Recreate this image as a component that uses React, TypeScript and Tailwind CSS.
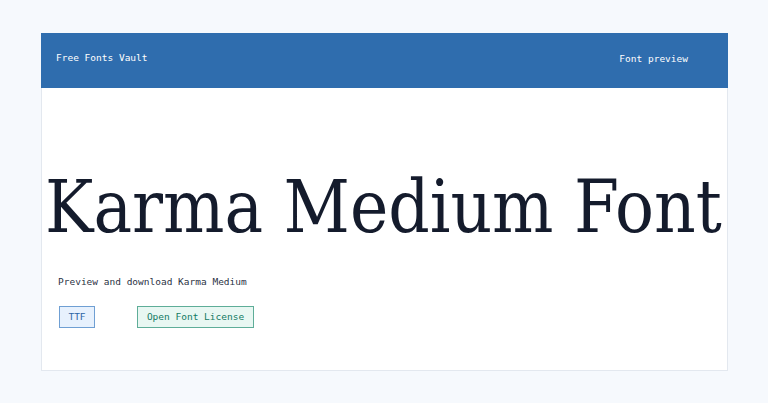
export default function App() {
  const mono = { fontFamily: '"DejaVu Sans Mono", "Liberation Mono", monospace' };
  return (
    <div className="min-h-[403px] w-full bg-[#f6f9fd] pt-[33px] pl-[41px] pr-[40px]">
      <div className="w-[687px] h-[338px] bg-white border border-[#e3e8ef] flex flex-col">
        <header className="h-[55px] -mt-px -mx-px bg-[#2f6dae] flex items-start justify-between text-white text-[9.5px]" style={mono}>
          <span className="pl-[15px] pt-[18px]">Free Fonts Vault</span>
          <span className="pr-[40px] pt-[19px]">Font preview</span>
        </header>
        <div className="flex flex-col">
          <h1
            className="mt-[83px] ml-[3px] text-[72px] leading-[72px] text-[#141b2c] whitespace-nowrap"
            style={{ fontFamily: '"DejaVu Serif Condensed", "DejaVu Serif", serif' }}
          >
            Karma Medium Font
          </h1>
          <p className="mt-[32px] ml-[16px] text-[9.5px] text-[#2c3345]" style={mono}>
            Preview and download Karma Medium
          </p>
          <div className="mt-[17px] ml-[17px] flex gap-[42px] text-[9.5px]" style={mono}>
            <span className="w-[36px] h-[22px] flex items-center justify-center bg-[#e7f1fd] border border-[#6f9fd3] text-[#2c65a5]">
              TTF
            </span>
            <span className="w-[117px] h-[22px] flex items-center justify-center bg-[#e8f7f2] border border-[#5ead98] text-[#137a63]">
              Open Font License
            </span>
          </div>
        </div>
      </div>
    </div>
  );
}
